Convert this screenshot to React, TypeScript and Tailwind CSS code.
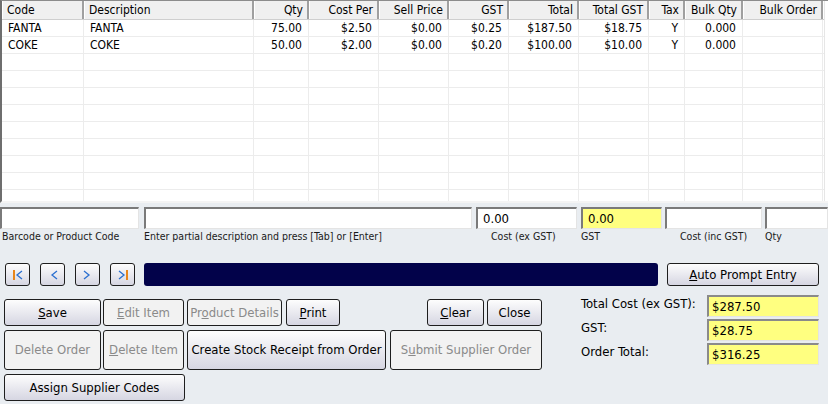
import React from "react";

const cols = [
  { key: "code", label: "Code", w: 82, align: "left" },
  { key: "desc", label: "Description", w: 170, align: "left" },
  { key: "qty", label: "Qty", w: 55, align: "right" },
  { key: "cost", label: "Cost Per", w: 70, align: "right" },
  { key: "sell", label: "Sell Price", w: 70, align: "right" },
  { key: "gst", label: "GST", w: 60, align: "right" },
  { key: "total", label: "Total", w: 70, align: "right" },
  { key: "tgst", label: "Total GST", w: 70, align: "right" },
  { key: "tax", label: "Tax", w: 36, align: "right" },
  { key: "bqty", label: "Bulk Qty", w: 58, align: "right" },
  { key: "border", label: "Bulk Order", w: 80, align: "right" },
];

const rows: Record<string, string>[] = [
  { code: "FANTA", desc: "FANTA", qty: "75.00", cost: "$2.50", sell: "$0.00", gst: "$0.25", total: "$187.50", tgst: "$18.75", tax: "Y", bqty: "0.000", border: "" },
  { code: "COKE", desc: "COKE", qty: "50.00", cost: "$2.00", sell: "$0.00", gst: "$0.20", total: "$100.00", tgst: "$10.00", tax: "Y", bqty: "0.000", border: "" },
];

const emptyRows = Array.from({ length: 9 }, () => ({} as Record<string, string>));

function Btn({
  children,
  w,
  h,
  disabled,
}: {
  children: React.ReactNode;
  w: number;
  h: number;
  disabled?: boolean;
}) {
  return (
    <div
      style={{ width: w, height: h }}
      className={
        "flex items-center justify-center shrink-0 whitespace-nowrap rounded-[3px] border border-[#1e1e1e] text-[13px] " +
        (disabled
          ? "bg-[#f2f2f2] text-[#8a8a8a]"
          : "bg-gradient-to-b from-[#fdfdfd] to-[#d6d6e2] text-black")
      }
    >
      {children}
    </div>
  );
}

function NavIcon({ kind }: { kind: "first" | "prev" | "next" | "last" }) {
  return (
    <svg width="14" height="12" viewBox="0 0 14 12">
      {kind === "first" && <rect x="2" y="1" width="2" height="10" fill="#e8861c" />}
      {kind === "last" && <rect x="10" y="1" width="2" height="10" fill="#e8861c" />}
      {(kind === "first" || kind === "prev") && (
        <polyline points="11,2 6,6 11,10" fill="none" stroke="#2a6fd0" strokeWidth="1.3" />
      )}
      {(kind === "next" || kind === "last") && (
        <polyline points="3,2 8,6 3,10" fill="none" stroke="#2a6fd0" strokeWidth="1.3" />
      )}
    </svg>
  );
}

function NavBtn({ kind }: { kind: "first" | "prev" | "next" | "last" }) {
  return (
    <div className="w-[25px] h-[23px] flex items-center justify-center rounded-[3px] border border-[#1e1e1e] bg-gradient-to-b from-[#fdfdfd] to-[#d6d6e2]">
      <NavIcon kind={kind} />
    </div>
  );
}

function Field({ w, value, yellow }: { w: number; value?: string; yellow?: boolean }) {
  return (
    <div
      style={{ width: w }}
      className={
        "h-[22px] shrink-0 border-t-2 border-l-2 border-b border-r border-t-[#7a7a7a] border-l-[#7a7a7a] border-b-[#e4e4e4] border-r-[#e4e4e4] flex items-center px-[5px] text-[13px] " +
        (yellow ? "bg-[#ffff80]" : "bg-white")
      }
    >
      {value}
    </div>
  );
}

function TotalBox({ value }: { value: string }) {
  return (
    <div className="w-[112px] h-[22px] bg-[#ffff80] border-t-2 border-l-2 border-b border-r border-t-[#8a8a8a] border-l-[#8a8a8a] border-b-[#e4e4e4] border-r-[#e4e4e4] flex items-center px-[3px] text-[13px]">
      {value}
    </div>
  );
}

export default function App() {
  return (
    <div className="w-[828px] h-[404px] overflow-hidden bg-[#e9edf1] text-black font-['DejaVu_Sans_Condensed','DejaVu_Sans',sans-serif]">
      {/* grid */}
      <div className="h-[203px] bg-white border-t border-l-2 border-t-[#8c8c8c] border-l-[#6e6e6e] border-b-2 border-b-[#f4f4f4] flex">
        <div className="flex-1 overflow-hidden">
          <div className="flex h-[19px] border-b border-[#cfcfcf]">
            {cols.map((c) => (
              <div
                key={c.key}
                style={{ width: c.w }}
                className={
                  "shrink-0 h-full whitespace-nowrap overflow-hidden bg-[#f0f0f0] border-r-2 border-r-[#a0a0a0] border-l border-l-white flex items-center px-[4px] text-[12px] " +
                  (c.align === "right" ? "justify-end" : "justify-start")
                }
              >
                {c.label}
              </div>
            ))}
          </div>
          {[...rows, ...emptyRows].map((r, i) => (
            <div key={i} className="flex h-[17px] border-b border-[#ececec]">
              {cols.map((c) => (
                <div
                  key={c.key}
                  style={{ width: c.w }}
                  className={
                    "shrink-0 h-full whitespace-nowrap border-r border-r-[#ececec] flex items-center px-[6px] text-[12px] " +
                    (c.align === "right" ? "justify-end" : "justify-start")
                  }
                >
                  {r[c.key] ?? ""}
                </div>
              ))}
            </div>
          ))}
        </div>
        <div className="w-[4px] border-l border-[#e6e6e6] bg-white" />
      </div>

      {/* entry fields */}
      <div className="flex mt-[4px] h-[22px]">
        <Field w={139} />
        <div className="w-[5px]" />
        <Field w={328} />
        <div className="w-[4px]" />
        <Field w={101} value="0.00" />
        <div className="w-[4px]" />
        <Field w={81} value="0.00" yellow />
        <div className="w-[3px]" />
        <Field w={97} />
        <div className="w-[3px]" />
        <Field w={63} />
      </div>
      <div className="flex h-[16px] text-[10.5px] text-[#1a1a1a] items-center whitespace-nowrap">
        <div className="w-[144px] pl-[2px]">Barcode or Product Code</div>
        <div className="w-[347px]">Enter partial description and press [Tab] or [Enter]</div>
        <div className="w-[90px]">Cost (ex GST)</div>
        <div className="w-[99px]">GST</div>
        <div className="w-[85px]">Cost (inc GST)</div>
        <div>Qty</div>
      </div>

      {/* nav row */}
      <div className="flex items-center mt-[18px] h-[23px] pl-[5px]">
        <NavBtn kind="first" />
        <div className="w-[10px]" />
        <NavBtn kind="prev" />
        <div className="w-[10px]" />
        <NavBtn kind="next" />
        <div className="w-[10px]" />
        <NavBtn kind="last" />
        <div className="w-[9px]" />
        <div className="w-[514px] h-[23px] bg-[#02024a] rounded-[3px]" />
        <div className="w-[9px]" />
        <Btn w={152} h={23}>
          <span>
            <u>A</u>uto Prompt Entry
          </span>
        </Btn>
      </div>

      {/* bottom */}
      <div className="flex mt-[9px]">
        <div className="pl-[4px] mt-[4px] flex flex-col gap-[4px] w-[577px]">
          <div className="flex w-[538px]">
            <Btn w={97} h={27}>
              <span><u>S</u>ave</span>
            </Btn>
            <div className="w-[2px]" />
            <Btn w={81} h={27} disabled>
              <span><u>E</u>dit Item</span>
            </Btn>
            <div className="w-[3px]" />
            <Btn w={95} h={27} disabled>
              <span>Pr<u>o</u>duct Details</span>
            </Btn>
            <div className="w-[4px]" />
            <Btn w={54} h={27}>
              <span><u>P</u>rint</span>
            </Btn>
            <div className="flex-1" />
            <Btn w={57} h={27}>
              <span><u>C</u>lear</span>
            </Btn>
            <div className="w-[3px]" />
            <Btn w={55} h={27}>
              <span>Close</span>
            </Btn>
          </div>
          <div className="flex w-[538px]">
            <Btn w={97} h={40} disabled>
              <span>Delete Order</span>
            </Btn>
            <div className="w-[2px]" />
            <Btn w={81} h={40} disabled>
              <span><u>D</u>elete Item</span>
            </Btn>
            <div className="w-[3px]" />
            <Btn w={199} h={40}>
              <span>Create Stock Receipt from Order</span>
            </Btn>
            <div className="w-[4px]" />
            <Btn w={152} h={40} disabled>
              <span>S<u>u</u>bmit Supplier Order</span>
            </Btn>
          </div>
          <div className="flex">
            <Btn w={181} h={27}>
              <span>Assign Supplier Codes</span>
            </Btn>
          </div>
        </div>
        <div className="flex flex-col gap-[2px] pl-[4px] text-[13px]">
          {[
            ["Total Cost (ex GST):", "$287.50"],
            ["GST:", "$28.75"],
            ["Order Total:", "$316.25"],
          ].map(([l, v]) => (
            <div key={l} className="flex items-start h-[22px]">
              <div className="w-[126px] leading-[18px]">{l}</div>
              <TotalBox value={v} />
            </div>
          ))}
        </div>
      </div>
    </div>
  );
}
